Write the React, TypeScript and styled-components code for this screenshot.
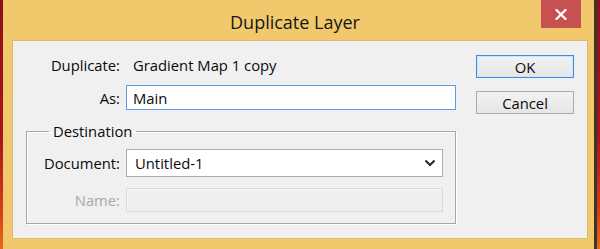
import React from "react";
import styled, { createGlobalStyle } from "styled-components";

const Global = createGlobalStyle`
  html, body { margin: 0; padding: 0; }
  body { font-family: "Open Sans", "Noto Sans", Arial, sans-serif; }
  * { box-sizing: border-box; }
`;

const Desktop = styled.div`
  width: 600px;
  height: 249px;
  overflow: hidden;
  display: flex;
  background: linear-gradient(to bottom, #8e0f1c 0%, #a8141e 55%, #d2401c 85%, #e86a1e 100%);
`;

const Window = styled.div`
  margin-left: 3px;
  width: 594px;
  height: 260px;
  background: #f1c96c;
  border-right: 3px solid #3e3527;
  padding: 0 8px 0 9px;
  display: flex;
  flex-direction: column;
`;

const TitleBar = styled.div`
  height: 40px;
  display: grid;
  grid-template-columns: 1fr auto 1fr;
  margin: 0 -1px 0 -9px;
`;

const Title = styled.div`
  grid-column: 2;
  align-self: start;
  padding-top: 10px;
  font-family: "Open Sans", "Noto Sans", sans-serif;
  font-size: 18px;
  line-height: 24px;
  color: #161616;
`;

const CloseButton = styled.div`
  grid-column: 3;
  justify-self: end;
  align-self: start;
  width: 40px;
  height: 28px;
  margin-right: 6px;
  background: #c75050;
  display: flex;
  align-items: center;
  justify-content: center;
`;

const Panel = styled.div`
  width: 576px;
  height: 199px;
  background: #f0f0f0;
  border: 1px solid #d9bb72;
  display: grid;
  grid-template-columns: 443px 98px;
  column-gap: 20px;
  align-items: start;
  font-size: 14.8px;
  color: #0a0a0a;
`;

const Main = styled.div`
  padding-top: 14px;
  display: flex;
  flex-direction: column;
`;

const FormGrid = styled.div<{ $labelWidth: number }>`
  display: grid;
  grid-template-columns: ${(p) => p.$labelWidth}px 1fr;
  column-gap: 6px;
  align-items: center;
`;

const Label = styled.div<{ $disabled?: boolean }>`
  text-align: right;
  line-height: 20px;
  white-space: nowrap;
  color: ${(p) => (p.$disabled ? "#a8a8a8" : "#0a0a0a")};
`;

const Value = styled.div`
  line-height: 20px;
  padding-left: 7px;
  white-space: nowrap;
`;

const TextBox = styled.div<{ $focused?: boolean }>`
  height: 25px;
  margin-top: 10px;
  background: #fff;
  border: 1px solid ${(p) => (p.$focused ? "#5a9fe0" : "#acacac")};
  padding: 0 6px;
  display: flex;
  align-items: center;
  line-height: 20px;
`;

const GroupBox = styled.fieldset`
  margin: 11px 0 0 13px;
  padding: 0 12px 11px 0;
  width: 430px;
  border: 1px solid #a6a6a6;
  box-shadow: 1px 1px 0 #fff, inset 1px 1px 0 #fff;
  min-width: 0;
`;

const Legend = styled.legend`
  margin-left: 22px;
  padding: 0 4px;
  line-height: 20px;
  font-size: 14.8px;
  color: #0a0a0a;
`;

const Select = styled.div`
  height: 28px;
  margin-top: 8px;
  background: #fff;
  border: 1px solid #acacac;
  padding: 0 6px 0 8px;
  display: flex;
  align-items: center;
  justify-content: space-between;
  line-height: 20px;
`;

const DisabledBox = styled.div`
  height: 24px;
  margin-top: 11px;
  background: #efefef;
  border: 1px solid #d9d9d9;
  box-shadow: inset 1px 1px 0 #f7f7f7;
`;

const NameLabel = styled(Label)`
  margin-top: 11px;
`;

const DocLabel = styled(Label)`
  margin-top: 8px;
`;

const AsLabel = styled(Label)`
  margin-top: 10px;
`;

const Buttons = styled.div`
  padding-top: 14px;
  display: flex;
  flex-direction: column;
  gap: 13px;
`;

const Button = styled.div<{ $default?: boolean }>`
  height: 23px;
  border: 1px solid ${(p) => (p.$default ? "#3d8ee0" : "#acacac")};
  background: linear-gradient(to bottom, #f2f2f2, #e6e6e6);
  box-shadow: ${(p) => (p.$default ? "inset 0 0 0 1px #cfe4f8" : "none")};
  display: flex;
  align-items: center;
  justify-content: center;
  font-size: 14.8px;
  line-height: 20px;
  color: #0a0a0a;
`;

export default function App() {
  return (
    <>
      <Global />
      <Desktop>
        <Window>
          <TitleBar>
            <Title>Duplicate Layer</Title>
            <CloseButton>
              <svg width="12" height="11" viewBox="0 0 12 11">
                <path d="M1.5 1 L10.5 10 M10.5 1 L1.5 10" stroke="#fff" strokeWidth="2.2" strokeLinecap="square" />
              </svg>
            </CloseButton>
          </TitleBar>
          <Panel>
            <Main>
              <FormGrid $labelWidth={107}>
                <Label>Duplicate:</Label>
                <Value>Gradient Map 1 copy</Value>
                <AsLabel>As:</AsLabel>
                <TextBox $focused>Main</TextBox>
              </FormGrid>
              <GroupBox>
                <Legend>Destination</Legend>
                <FormGrid $labelWidth={93}>
                  <DocLabel>Document:</DocLabel>
                  <Select>
                    <span>Untitled-1</span>
                    <svg width="12" height="8" viewBox="0 0 12 8">
                      <path d="M1.5 1.5 L6 6 L10.5 1.5" fill="none" stroke="#2b2b2b" strokeWidth="2.2" />
                    </svg>
                  </Select>
                  <NameLabel $disabled>Name:</NameLabel>
                  <DisabledBox />
                </FormGrid>
              </GroupBox>
            </Main>
            <Buttons>
              <Button $default>OK</Button>
              <Button>Cancel</Button>
            </Buttons>
          </Panel>
        </Window>
      </Desktop>
    </>
  );
}
